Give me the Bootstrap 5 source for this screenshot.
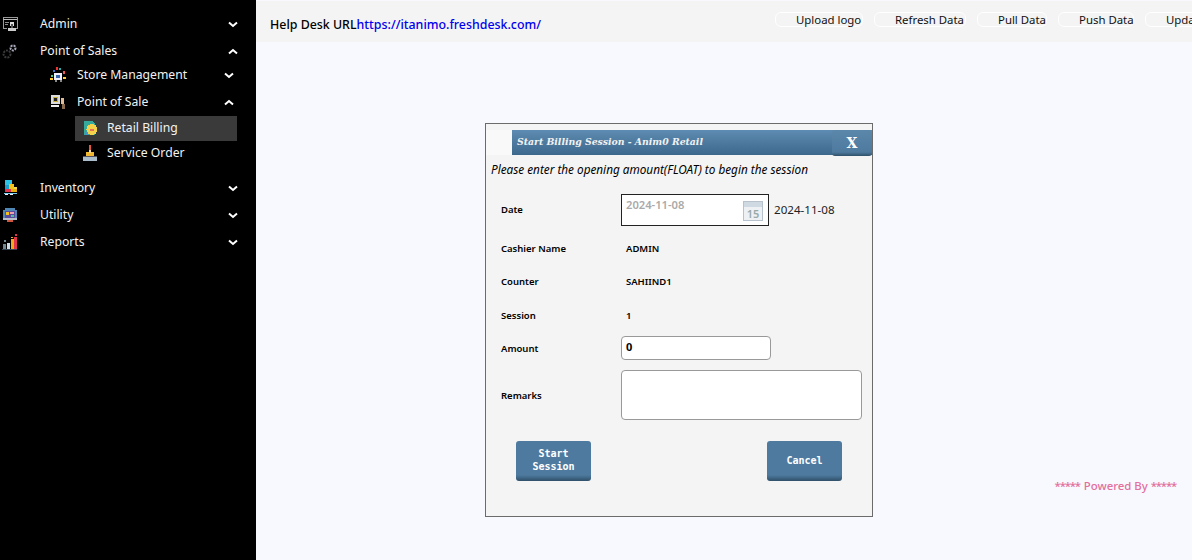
<!DOCTYPE html>
<html lang="en"><head><meta charset="utf-8"><title>Billing</title>
<link rel="stylesheet" href="https://cdn.jsdelivr.net/npm/bootstrap@5.3.0/dist/css/bootstrap.min.css">
<style>
html,body{height:100%;overflow:hidden}
body{background:#f8f9ff;font-family:"Noto Sans","Open Sans",sans-serif;color:#000}
.shell{height:560px;width:1192px}
.side{width:256px;background:#000;color:#f2f2f2;font-size:12.2px;padding-top:11px;flex:none}
.sitem{height:27px;position:relative;padding-left:40px;padding-right:18px}
.sitem.l2{padding-left:77px;padding-right:22px}
.sitem.pull{margin-top:-3px}
.sitem.l3{height:25px;margin-left:75px;padding-left:32px;width:162px;padding-right:0}
.sitem.on{background:#3a3a3a}
.sitem svg.ico{position:absolute;width:16px;height:16px;left:2px;top:5px;shape-rendering:crispEdges}
.sitem.l2 svg.ico{left:50px}
.sitem.l3 svg.ico{left:7px;top:4px}
.gap1{height:9px}
.chev{width:10px;height:7px}
.mainp{flex:1;min-width:0;overflow:hidden}
.topb{height:41px;margin-top:1px;background:#f4f4f4;padding-left:14px;font-size:12.4px;white-space:nowrap;overflow:hidden}
.topb a{color:#0000ee;text-decoration:none}
.hlink{padding-top:7px;width:505px;flex:none;font-weight:500}
.tbtns{gap:11px;margin-top:-5px;font-size:11.4px;flex:none}
.tb{height:15px;border:1px solid #fff;border-radius:6px;line-height:13px;padding:0 0 0 20px;background:#f4f4f4;color:#111}
.tb.w1{width:88px}.tb.w2{width:92px}.tb.w3{width:70px}.tb.w4{width:76px}.tb.w5{width:70px}
.stage{height:518px;padding:81px 0 0 229px;position:relative}
.dlg{width:388px;height:394px;border:1px solid #6b6b6b;background:#f4f4f4;padding-top:6px}
.dhead{background:#f9f9f9;padding-left:26px;height:25px}
.dtitle{height:25px;background:linear-gradient(#5e8bb1,#3d688d);color:#f2f2f2;font:italic bold 9.3px "DejaVu Serif",serif;padding-left:5px;line-height:24px;position:relative}
.dx{position:absolute;right:0;top:0;width:40px;height:26px;background:linear-gradient(#5b87ab 0,#4e7a9f 85%,#2f5069 100%);border-radius:3px;color:#fff;font:bold 14px "DejaVu Serif",serif;text-align:center;line-height:26px}
.dnote{font-style:italic;font-size:11.75px;padding:6px 0 0 5px;line-height:16px;height:39px}
.frow{display:flex;align-items:center;padding-left:15px;font-size:9.5px;font-weight:600}
.flab{width:120px;flex:none}
.fval{padding-left:5px}
.fbox1{width:148px;height:32px;border:1px solid #222;background:#fff;display:flex;font-size:11.2px;font-weight:600;color:#aaa;padding:2px 5px 0 4px;justify-content:space-between;flex:none}
.datev{font-size:11.6px;font-weight:400;margin-left:5px;color:#222}
.amt{width:150px;height:24px;border:1px solid #999;border-radius:4px;background:#fff;padding:0 4px;font-size:11px;font-weight:700;line-height:20px;margin-bottom:4px}
.rem{width:241px;height:50px;border:1px solid #999;border-radius:4px;background:#fff;margin-bottom:2px}
.act{height:40px;width:75px;background:linear-gradient(#4e7a9f 0,#4e7a9f 85%,#2f5069 100%);border:0;border-radius:3px;color:#fff;font:bold 10px/13px "DejaVu Sans Mono",monospace;padding:0 0 2px}
.pow{position:absolute;right:15px;top:435px;color:#e26f9c;font-size:11.4px;font-weight:500}
.stars{letter-spacing:-1.2px;margin-right:1px}
</style></head><body>
<div class="shell d-flex">
<nav class="side">
 <div class="sitem d-flex align-items-center justify-content-between"><svg class="ico" viewBox="0 0 16 16"><rect x="1" y="1" width="14" height="11" fill="none" stroke="#999"/><path d="M1 3.500h14" stroke="#bbb"/><path d="M3 6h4v1H3zM3 8h3v1H3z" fill="#888"/><rect x="8" y="6" width="4" height="4" fill="#ddd"/><path d="M5 11h9v4H5z" fill="#000"/><path d="M6 12h8v3H6z" fill="#ccc"/><path d="M9 8h2v4H9z" fill="#555"/></svg>Admin<svg class="chev" viewBox="0 0 10 7"><path d="M1 1.500 5 5l4-3.500" fill="none" stroke="#fff" stroke-width="2"/></svg></div>
 <div class="sitem d-flex align-items-center justify-content-between"><svg class="ico" viewBox="0 0 16 16" style="shape-rendering:auto"><circle cx="11" cy="5" r="2.500" fill="none" stroke="#aab" stroke-width="2" stroke-dasharray="2 1"/><circle cx="5" cy="11" r="3.500" fill="none" stroke="#3a3a3a" stroke-width="2" stroke-dasharray="2 1"/></svg>Point of Sales<svg class="chev" viewBox="0 0 10 7"><path d="M1 5.500 5 2l4 3.500" fill="none" stroke="#fff" stroke-width="2"/></svg></div>
 <div class="sitem l2 pull d-flex align-items-center justify-content-between"><svg class="ico" viewBox="0 0 16 16"><rect x="4" y="6" width="8" height="7" fill="#eef"/><rect x="6" y="8" width="4" height="3" fill="#3565a8"/><rect x="6" y="0" width="2" height="3" fill="#e33"/><rect x="9" y="1" width="2" height="2" fill="#3aa"/><rect x="3" y="3" width="2" height="2" fill="#37c"/><rect x="13" y="4" width="2" height="3" fill="#e55"/><rect x="0" y="11" width="3" height="2" fill="#fc3"/><rect x="1" y="8" width="2" height="2" fill="#4c8"/><rect x="13" y="10" width="3" height="2" fill="#fc3"/><rect x="5" y="13" width="2" height="2" fill="#888"/><rect x="10" y="13" width="2" height="2" fill="#888"/></svg>Store Management<svg class="chev" viewBox="0 0 10 7"><path d="M1 1.500 5 5l4-3.500" fill="none" stroke="#fff" stroke-width="2"/></svg></div>
 <div class="sitem l2 d-flex align-items-center justify-content-between"><svg class="ico" viewBox="0 0 16 16"><rect x="1" y="1" width="9" height="9" fill="#ddd"/><rect x="3" y="3" width="5" height="5" fill="#c9b02e"/><rect x="4" y="4" width="3" height="3" fill="#222"/><rect x="1" y="11" width="8" height="2" fill="#eee"/><rect x="11" y="4" width="3" height="6" fill="#e3bd98"/><rect x="12" y="10" width="3" height="5" fill="#8a6a4c"/></svg>Point of Sale<svg class="chev" viewBox="0 0 10 7"><path d="M1 5.500 5 2l4 3.500" fill="none" stroke="#fff" stroke-width="2"/></svg></div>
 <div class="sitem l3 on d-flex align-items-center"><svg class="ico" viewBox="0 0 16 16"><path d="M2 1h8l3 3v11H2z" fill="#35a99c"/><path d="M3 8l3 7h-3z" fill="#4a8fd0"/><circle cx="10" cy="9.500" r="5.500" fill="#f6d24a"/><path d="M8 9h4v2H8z" fill="#e0705a"/></svg>Retail Billing</div>
 <div class="sitem l3 d-flex align-items-center"><svg class="ico" viewBox="0 0 16 16"><rect x="1" y="12" width="14" height="4" fill="#a9bdcc"/><rect x="1" y="11" width="14" height="1" fill="#556"/><rect x="4" y="7" width="8" height="4" fill="#f0b830"/><rect x="7" y="0" width="2" height="5" fill="#e2583e"/><rect x="7" y="5" width="2" height="3" fill="#f2d9a0"/></svg>Service Order</div>
 <div class="gap1"></div>
 <div class="sitem d-flex align-items-center justify-content-between"><svg class="ico" viewBox="0 0 16 16"><rect x="3" y="0" width="7" height="5" fill="#2cc3e8"/><rect x="3" y="5" width="4" height="6" fill="#1a9fd0"/><rect x="7" y="4" width="5" height="7" fill="#f6c21c"/><rect x="12" y="7" width="3" height="4" fill="#f6d84a"/><rect x="3" y="9" width="6" height="3" fill="#e0354a"/><rect x="9" y="9" width="6" height="3" fill="#e8b010"/><rect x="2" y="13" width="13" height="1" fill="#7fd0f0"/><rect x="3" y="14" width="3" height="1" fill="#eef"/><rect x="8" y="14" width="3" height="1" fill="#eef"/></svg>Inventory<svg class="chev" viewBox="0 0 10 7"><path d="M1 1.500 5 5l4-3.500" fill="none" stroke="#fff" stroke-width="2"/></svg></div>
 <div class="sitem d-flex align-items-center justify-content-between"><svg class="ico" viewBox="0 0 16 16"><rect x="3" y="1" width="10" height="12" fill="#4e86b4"/><rect x="1" y="3" width="14" height="8" fill="#4e86b4"/><rect x="3" y="4" width="10" height="7" fill="#5a4a9a"/><rect x="4" y="5" width="3" height="3" fill="#f6c21c"/><rect x="8" y="5" width="4" height="2" fill="#f0a0b0"/><rect x="9" y="8" width="3" height="2" fill="#4cc0a0"/><rect x="1" y="11" width="14" height="2" fill="#b9bdc8"/><rect x="5" y="13" width="6" height="2" fill="#d0553f"/></svg>Utility<svg class="chev" viewBox="0 0 10 7"><path d="M1 1.500 5 5l4-3.500" fill="none" stroke="#fff" stroke-width="2"/></svg></div>
 <div class="sitem d-flex align-items-center justify-content-between"><svg class="ico" viewBox="0 0 16 16"><rect x="1" y="10" width="3" height="5" fill="#6f8790"/><rect x="2" y="6" width="2" height="2" fill="#6f8790"/><rect x="5" y="9" width="3" height="6" fill="#c8dde6"/><rect x="9" y="5" width="3" height="10" fill="#f6a81c"/><rect x="12" y="3" width="3" height="12" fill="#e0354a"/><rect x="13" y="0" width="2" height="2" fill="#e0354a"/><rect x="9" y="3" width="2" height="1" fill="#f6a81c"/><rect x="0" y="15" width="15" height="1" fill="#345"/></svg>Reports<svg class="chev" viewBox="0 0 10 7"><path d="M1 1.500 5 5l4-3.500" fill="none" stroke="#fff" stroke-width="2"/></svg></div>
</nav>
<main class="mainp">
 <div class="topb d-flex align-items-center">
  <div class="hlink">Help Desk URL<a href="#">https://itanimo.freshdesk.com/</a></div>
  <div class="tbtns d-flex"><div class="tb w1">Upload logo</div><div class="tb w2">Refresh Data</div><div class="tb w3">Pull Data</div><div class="tb w4">Push Data</div><div class="tb w5">Update</div></div>
 </div>
 <div class="stage">
  <div class="dlg">
   <div class="dhead"><div class="dtitle">Start Billing Session - Anim0 Retail<div class="dx">X</div></div></div>
   <div class="dnote">Please enter the opening amount(FLOAT) to begin the session</div>
   <div class="frow" style="height:32px"><div class="flab">Date</div><div class="fbox1"><span>2024-11-08</span><svg width="20" height="20" viewBox="0 0 20 20" class="mt-1"><rect x=".5" y=".5" width="19" height="19" fill="#eef1f4" stroke="#b7c2cc"/><rect x="1" y="1" width="18" height="5" fill="#cfd9e2"/><text x="10" y="17" font-size="11" text-anchor="middle" fill="#9aa">15</text></svg></div><span class="datev">2024-11-08</span></div>
   <div class="frow" style="height:41px;padding-top:5px"><div class="flab">Cashier Name</div><div class="fval">ADMIN</div></div>
   <div class="frow" style="height:31px"><div class="flab">Counter</div><div class="fval">SAHIIND1</div></div>
   <div class="frow" style="height:36px"><div class="flab">Session</div><div class="fval">1</div></div>
   <div class="frow" style="height:31px"><div class="flab">Amount</div><div class="amt">0</div></div>
   <div class="frow" style="height:62px"><div class="flab">Remarks</div><div class="rem"></div></div>
   <div class="d-flex justify-content-between" style="padding:14px 30px 0 30px"><button class="act">Start<br>Session</button><button class="act">Cancel</button></div>
  </div>
  <div class="pow"><span class="stars">*****</span> Powered By <span class="stars">*****</span></div>
 </div>
</main>
</div>
<script src="https://cdn.jsdelivr.net/npm/bootstrap@5.3.0/dist/js/bootstrap.bundle.min.js"></script>
</body></html>
